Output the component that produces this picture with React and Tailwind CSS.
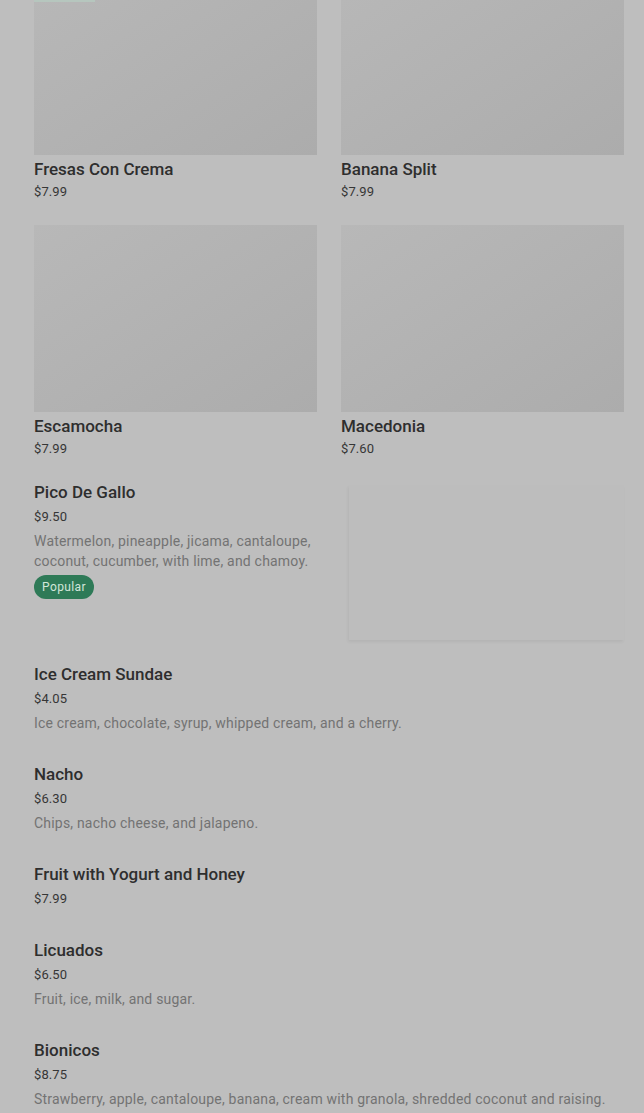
import React from "react";

const gridItems = [
  { name: "Fresas Con Crema", price: "$7.99" },
  { name: "Banana Split", price: "$7.99" },
  { name: "Escamocha", price: "$7.99" },
  { name: "Macedonia", price: "$7.60" },
];

const listItems = [
  { name: "Ice Cream Sundae", price: "$4.05", desc: "Ice cream, chocolate, syrup, whipped cream, and a cherry." },
  { name: "Nacho", price: "$6.30", desc: "Chips, nacho cheese, and jalapeno." },
  { name: "Fruit with Yogurt and Honey", price: "$7.99" },
  { name: "Licuados", price: "$6.50", desc: "Fruit, ice, milk, and sugar." },
  { name: "Bionicos", price: "$8.75", desc: "Strawberry, apple, cantaloupe, banana, cream with granola, shredded coconut and raising." },
];

function Card({ item }) {
  return (
    <div className="flex flex-col">
      <div className="h-[187px] w-full bg-gradient-to-br from-[#b8b8b8] to-[#acacac]" />
      <div className="mt-[2px] text-[17px] leading-6 font-medium text-[#2e2e2e]">{item.name}</div>
      <div className="mt-px text-[13px] leading-5 text-[#363636] tracking-[0.1px]">{item.price}</div>
    </div>
  );
}

export default function App() {
  return (
    <div
      className="min-h-[1113px] w-full overflow-hidden bg-[#bebebe] pl-[34px] pr-[20px] relative"
      style={{ fontFamily: "Roboto, 'Noto Sans', sans-serif" }}
    >
      <div className="absolute left-[34px] top-0 h-[2px] w-[61px] bg-[#b6c6be]" />
      <div className="grid grid-cols-2 gap-x-6 gap-y-[23px] -mt-[32px]">
        {gridItems.map((it) => (
          <Card key={it.name} item={it} />
        ))}
      </div>

      <div className="mt-[21px] flex">
        <div className="w-[290px] flex flex-col items-start">
          <div className="text-[17px] leading-6 font-medium text-[#2e2e2e]">Pico De Gallo</div>
          <div className="mt-[3px] text-[13px] leading-5 text-[#363636] tracking-[0.1px]">$9.50</div>
          <div className="mt-[4px] text-[14px] leading-5 text-[#737373] tracking-[0.2px]">
            Watermelon, pineapple, jicama, cantaloupe, coconut, cucumber, with lime, and chamoy.
          </div>
          <div className="mt-[4px] h-6 px-2 flex items-center rounded-full bg-[#2e7a57] text-[12px] tracking-[0.4px] text-[#d2e6da]">
            Popular
          </div>
        </div>
        <div className="ml-auto mt-[5px] h-[155px] w-[275px] bg-[#bdbdbd] shadow-[-1px_2px_3px_rgba(0,0,0,0.06)]" />
      </div>

      <div className="mt-[22px] flex flex-col gap-[29px]">
        {listItems.map((it) => (
          <div key={it.name} className="flex flex-col">
            <div className="text-[17px] leading-6 font-medium text-[#2e2e2e]">{it.name}</div>
            <div className="mt-[3px] text-[13px] leading-5 text-[#363636] tracking-[0.1px]">{it.price}</div>
            {it.desc && (
              <div className="mt-[4px] text-[14px] leading-5 text-[#737373] tracking-[0.2px]">{it.desc}</div>
            )}
          </div>
        ))}
      </div>
    </div>
  );
}
